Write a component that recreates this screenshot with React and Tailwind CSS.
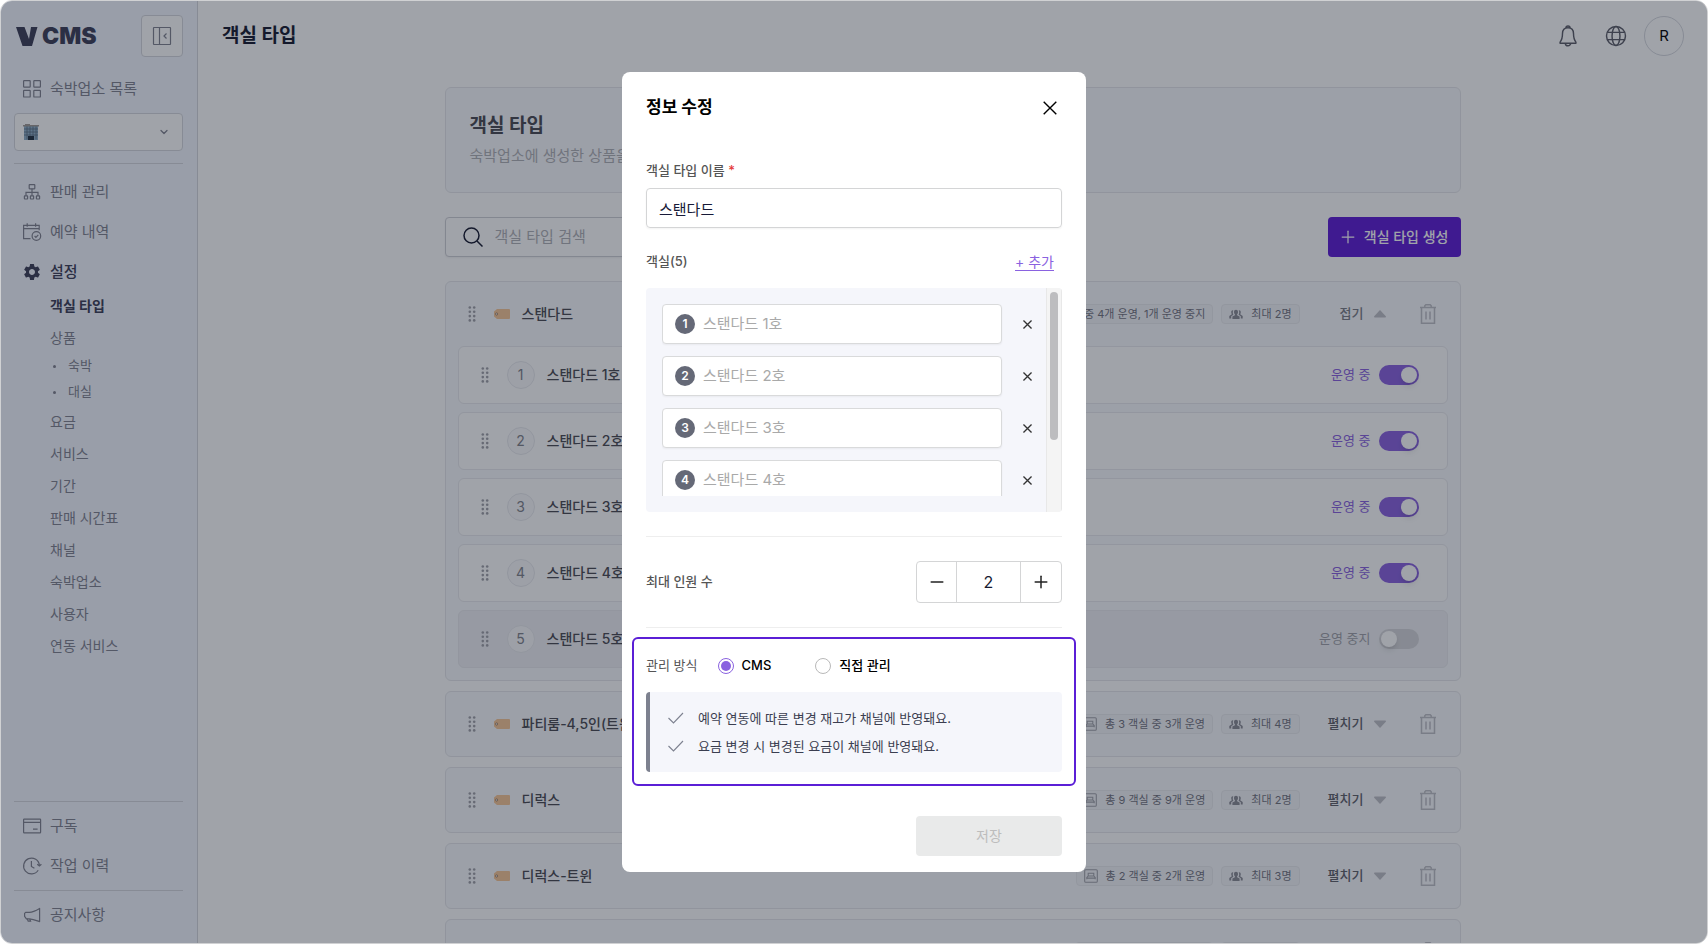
import { useState } from 'react';
import { ChevronDown, Plus, Minus } from 'lucide-react';
import { MdSettings } from 'react-icons/md';

const TYPES = [
  { id: 1, name: '스탠다드', rooms: '총 5 객실 중 4개 운영, 1개 운영 중지', max: 2, open: true },
  { id: 2, name: '파티룸-4,5인(트윈)', rooms: '총 3 객실 중 3개 운영', max: 4 },
  { id: 3, name: '디럭스', rooms: '총 9 객실 중 9개 운영', max: 2 },
  { id: 4, name: '디럭스-트윈', rooms: '총 2 객실 중 2개 운영', max: 3 },
  { id: 5, name: '스위트', rooms: '총 2 객실 중 2개 운영', max: 4 },
];

const ROOMS = [1, 2, 3, 4, 5].map((n) => ({ n, name: `스탠다드 ${n}호`, active: n !== 5 }));

const SETTINGS = ['요금', '서비스', '기간', '판매 시간표', '채널', '숙박업소', '사용자', '연동 서비스'];

const NOTES = ['예약 연동에 따른 변경 재고가 채널에 반영돼요.', '요금 변경 시 변경된 요금이 채널에 반영돼요.'];

function Svg({ size = 20, width = 1.2, className, children }) {
  return (
    <svg
      width={size}
      height={size}
      viewBox="0 0 20 20"
      fill="none"
      stroke="currentColor"
      strokeWidth={width}
      className={className}
      aria-hidden="true"
    >
      {children}
    </svg>
  );
}

const GridIcon = () => (
  <Svg>
    <rect x="1.6" y="1.6" width="6.6" height="6.6" rx="0.6" />
    <rect x="11.8" y="1.6" width="6.6" height="6.6" rx="0.6" />
    <rect x="1.6" y="11.4" width="6.6" height="6.6" rx="0.6" />
    <rect x="11.8" y="11.4" width="6.6" height="6.6" rx="0.6" />
  </Svg>
);

const TreeIcon = () => (
  <Svg>
    <rect x="7.2" y="2.6" width="5.6" height="4.2" rx="0.5" />
    <path d="M10 6.8v7M4 13.8v-3.4h12v3.4" />
    <rect x="2.4" y="13.8" width="3.2" height="3.2" rx="0.4" />
    <rect x="8.4" y="13.8" width="3.2" height="3.2" rx="0.4" />
    <rect x="14.4" y="13.8" width="3.2" height="3.2" rx="0.4" />
  </Svg>
);

const CalendarIcon = () => (
  <Svg>
    <path d="M8.5 16.6H1.6V3.4h15.6v4.8M1.6 6.6h15.6M5.2 1.2v3.6M13.6 1.2v3.6" />
    <circle cx="14.4" cy="14" r="4.3" />
    <path d="M12.6 14l1.3 1.3 2.4-2.4" />
  </Svg>
);

const CardIcon = () => (
  <Svg>
    <rect x="1.6" y="3.2" width="17" height="13.6" rx="0.6" />
    <path d="M1.6 6.4h17M11 13.2h4.6" />
  </Svg>
);

const HistoryIcon = () => (
  <Svg>
    <path d="M16.2 14.2A7.9 7.9 0 1 1 17.4 9.4M15.2 8.2l2.2 1.8 2-1.8M9.4 5v5.4l3 1.8" />
  </Svg>
);

const HornIcon = () => (
  <Svg>
    <path
      d="M3.6 7.4h3.8c3.4-.2 6.4-1.8 10.2-4v13.2c-3.8-1.4-6.6-2.6-10.2-2.8H4.4l-1.8-2.4V8.4z"
      strokeLinejoin="round"
    />
    <path d="M5.2 13.8l1 2.4h2.4l-.8-2.2" />
  </Svg>
);

const BellIcon = () => (
  <Svg size={24}>
    <path
      d="M8.3 3.3a1.7 1.7 0 0 1 3.4 0M10 3.2c-3 0-4.6 2.2-4.6 5 0 3.4-.5 5.2-2 6.9v.9h13.2v-.9c-1.5-1.7-2-3.5-2-6.9 0-2.8-1.6-5-4.6-5zM7.8 16a2.2 2.2 0 0 0 4.4 0"
      strokeLinejoin="round"
    />
  </Svg>
);

const GlobeIcon = () => (
  <Svg size={24}>
    <circle cx="10" cy="10" r="7.9" />
    <ellipse cx="10" cy="10" rx="3.3" ry="7.9" />
    <path d="M2.7 7h14.6M2.7 13h14.6" />
  </Svg>
);

const SearchIcon = () => (
  <Svg width={1.5} className="shrink-0 text-[#171a30]">
    <circle cx="8.5" cy="8.5" r="7.5" />
    <path d="M14 14l5.5 5.5" />
  </Svg>
);

const CloseIcon = ({ size = 14, width = 2 }) => (
  <Svg size={size} width={width}>
    <path d="M1 1l18 18M19 1L1 19" />
  </Svg>
);

const PanelIcon = () => (
  <Svg>
    <rect x="1.5" y="1.5" width="17" height="17" rx="0.5" />
    <path d="M7.5 1.5v17M14.5 7.5L12 10l2.5 2.5" />
  </Svg>
);

function BuildingIcon() {
  return (
    <svg width="16" height="16" viewBox="0 0 16 16" aria-hidden="true">
      <path d="M1 2h14v14H1z" fill="#8fb0c8" />
      <path d="M0 1h16v1.5H0zM2 0h5v1H2z" fill="#a09a94" />
      <path d="M1 5h14M1 8h14M1 11h14M4 2.5v13M7 2.5v13M10 2.5v13M13 2.5v13" stroke="#5a6d80" strokeWidth="0.8" />
      <path d="M5 12h6v4H5z" fill="#22303f" />
    </svg>
  );
}

function Grip() {
  return (
    <svg width="8" height="16" viewBox="0 0 8 16" className="shrink-0 fill-[#a0a1a8]" aria-hidden="true">
      {[1.5, 5.8, 10.1, 14.4].map((y) => (
        <g key={y}>
          <circle cx="1.8" cy={y} r="1.3" />
          <circle cx="6.2" cy={y} r="1.3" />
        </g>
      ))}
    </svg>
  );
}

function TagIcon() {
  return (
    <svg width="16" height="10" viewBox="0 0 16 10" className="shrink-0" aria-hidden="true">
      <path d="M3 0h12a1 1 0 0 1 1 1v8a1 1 0 0 1-1 1H3L0 7.5v-5z" fill="#f7c696" />
      <circle cx="2.6" cy="5" r="1.1" fill="#fff" stroke="#8a6a50" strokeWidth="0.7" />
    </svg>
  );
}

function BedIcon() {
  return (
    <Svg size={14} width={1.5} className="text-[#a0a1a8]">
      <rect x="1" y="1" width="18" height="18" rx="1.5" />
      <path d="M6 10V6h8v4M4 14.5V12l2-2h8l2 2v2.5M4 13h12" />
    </Svg>
  );
}

function PeopleIcon() {
  return (
    <svg width="14" height="10" viewBox="0 0 14 10" className="fill-[#8b8c95]" aria-hidden="true">
      <path d="M7 .8c1.200 0 2 .9 2 2.100 0 1-.5 1.900-.9 2.400v.9L10.600 7.600V10H3.400V7.600L5.900 6.200v-.9C5.500 4.800 5 3.900 5 2.900 5 1.700 5.800.8 7 .8z" />
      <path d="M4.300 1.200C3 .9 2.200 1.800 2.200 3c0 1 .3 1.600.6 2.200L.3 7v2.400h1.900V7.200l2.200-1.400C3.700 4.500 3.600 2.500 4.300 1.200zM9.700 1.200c1.300-.3 2.100.6 2.100 1.800 0 1-.3 1.600-.6 2.200L13.700 7v2.400h-1.900V7.200L9.600 5.800c.7-1.300.8-3.300.1-4.600z" />
    </svg>
  );
}

function TrashIcon() {
  return (
    <svg width="16" height="20" viewBox="0 0 16 20" fill="none" stroke="currentColor" strokeWidth="1.5" aria-hidden="true">
      <path d="M0 3.6h16M4.800 3.600V1.800l1-1h4.400l1 1v1.800M1.500 3.600v15.700h13V3.600M6 7.500v8M10 7.500v8" />
    </svg>
  );
}

function CheckIcon() {
  return (
    <svg width="16" height="12" viewBox="0 0 16 12" fill="none" stroke="#7d818f" strokeWidth="1.1" aria-hidden="true">
      <path d="M0.500 6l5 5L15 1" />
    </svg>
  );
}

function NavItem({ icon, children, active }) {
  return (
    <a
      href="#"
      className={`flex h-10 items-center gap-2 pl-2 text-[15px] ${
        active ? 'font-medium text-[#3d3e58]' : 'text-[#80828f]'
      }`}
    >
      <span className="flex w-5 justify-center">{icon}</span>
      {children}
    </a>
  );
}

function SubItem({ children, active }) {
  return (
    <a
      href="#"
      className={`flex h-8 items-center pl-9 text-sm ${active ? 'font-bold text-[#3d3e58]' : 'text-[#80828f]'}`}
    >
      {children}
    </a>
  );
}

function Sidebar() {
  return (
    <aside className="flex w-[197px] shrink-0 flex-col border-r border-[#d6d8de] bg-[#f4f7ff] pt-3.5 pr-3.5 pb-2 pl-[13px]">
      <div className="flex items-center justify-between pl-0.5 text-[#3d3e58]">
        <div className="flex items-center gap-1">
          <svg width="22" height="19" viewBox="0 0 22 19" fill="currentColor" className="shrink-0" aria-hidden="true">
            <path d="M0 0h8.500l4.500 12L15 0h6.500l-5.500 19H6.500z" />
          </svg>
          <span className="text-[23px] leading-6 font-black">CMS</span>
        </div>
        <button
          type="button"
          aria-label="메뉴 접기"
          className="flex size-[42px] items-center justify-center rounded border border-[#d6d8de] bg-white text-[#80828f]"
        >
          <PanelIcon />
        </button>
      </div>
      <div className="mt-3">
        <NavItem icon={<GridIcon />}>숙박업소 목록</NavItem>
      </div>
      <button
        type="button"
        aria-label="숙박업소 선택"
        className="mt-1 flex h-[38px] shrink-0 items-center justify-between rounded border border-[#d6d8de] bg-white px-2 text-[#80828f]"
      >
        <BuildingIcon />
        <ChevronDown size={12} strokeWidth={2.5} className="mr-1" />
      </button>
      <nav className="mt-3 border-t border-[#d6d8de] pt-2">
        <NavItem icon={<TreeIcon />}>판매 관리</NavItem>
        <NavItem icon={<CalendarIcon />}>예약 내역</NavItem>
        <NavItem icon={<MdSettings size={20} />} active>
          설정
        </NavItem>
        <div className="-mt-0.5">
          <SubItem active>객실 타입</SubItem>
          <SubItem>상품</SubItem>
          <ul className="mb-0.5 flex flex-col gap-0.5 pl-9 text-[13px] text-[#80828f]">
            {['숙박', '대실'].map((item) => (
              <li key={item}>
                <a href="#" className="flex h-6 items-center gap-3 pl-[3px]">
                  <span className="size-[3px] rounded-full bg-[#80828f]" />
                  {item}
                </a>
              </li>
            ))}
          </ul>
          {SETTINGS.map((item) => (
            <SubItem key={item}>{item}</SubItem>
          ))}
        </div>
      </nav>
      <div className="mt-auto border-t border-[#d6d8de] py-1">
        <NavItem icon={<CardIcon />}>구독</NavItem>
        <NavItem icon={<HistoryIcon />}>작업 이력</NavItem>
      </div>
      <div className="border-t border-[#d6d8de] pt-1">
        <NavItem icon={<HornIcon />}>공지사항</NavItem>
      </div>
    </aside>
  );
}

function Header() {
  return (
    <header className="flex h-[70px] shrink-0 items-center justify-between pr-[23px] pl-6">
      <h1 className="text-[19px] font-bold text-[#171a30]">객실 타입</h1>
      <div className="flex gap-2 text-[#5c5d68]">
        <button type="button" aria-label="알림" className="flex size-10 items-center justify-center">
          <BellIcon />
        </button>
        <button type="button" aria-label="언어" className="flex size-10 items-center justify-center">
          <GlobeIcon />
        </button>
        <button type="button" className="size-10 rounded-full border border-[#d6d8de] text-[15px] text-black">
          R
        </button>
      </div>
    </header>
  );
}

function Badge({ icon, children }) {
  return (
    <span className="flex h-5 items-center gap-2 rounded border border-[#eaebef] bg-[#f4f5f9] px-[7px] text-[11px] whitespace-nowrap text-[#72737e]">
      {icon}
      {children}
    </span>
  );
}

function RoomRow({ room }) {
  return (
    <li
      className={`flex h-[58px] items-center rounded-md border border-[#e9eaee] pr-7 pl-[22px] ${
        room.active ? 'bg-white' : 'bg-[#f0f1f5]'
      }`}
    >
      <Grip />
      <span className="ml-[18px] flex size-7 items-center justify-center rounded-full border border-[#e9eaee] bg-[#fafafc] text-sm text-[#80828a]">
        {room.n}
      </span>
      <span className="ml-3 text-sm font-medium text-[#4a4a52]">{room.name}</span>
      <label
        className={`ml-auto flex items-center gap-2 text-[13px] ${room.active ? 'text-[#8a62e0]' : 'text-[#a0a1a8]'}`}
      >
        {room.active ? '운영 중' : '운영 중지'}
        <input
          type="checkbox"
          defaultChecked={room.active}
          className="h-5 w-10 appearance-none rounded-full bg-[#d6d6da] before:mt-0.5 before:ml-0.5 before:block before:size-4 before:rounded-full before:bg-white before:shadow-md checked:bg-[#8a62e0] checked:before:ml-[22px]"
        />
      </label>
    </li>
  );
}

function TypeCard({ type }) {
  return (
    <section className="rounded-md border border-[#e6e7eb] bg-[#f9fafd]">
      <div className="flex h-16 items-center pr-6 pl-[22px]">
        <Grip />
        <span className="ml-[18px]">
          <TagIcon />
        </span>
        <h3 className="ml-3 text-sm font-medium text-[#4a4a52]">{type.name}</h3>
        <div className="ml-auto flex gap-2">
          <Badge icon={<BedIcon />}>{type.rooms}</Badge>
          <Badge icon={<PeopleIcon />}>최대 {type.max}명</Badge>
        </div>
        <button
          type="button"
          className={`ml-6 flex w-[62px] items-center justify-end gap-2.5 text-[13px] font-medium ${
            type.open ? 'text-[#7c7d86]' : 'text-[#60616a]'
          }`}
        >
          {type.open ? '접기' : '펼치기'}
          <svg width="12" height="8" viewBox="0 0 12 8" className="fill-[#bfc0c6]" aria-hidden="true">
            <path d={type.open ? 'M6 0l6 6.5-.5 1H.5L0 6.5z' : 'M6 8L0 1.5l.5-1h11l.5 1z'} />
          </svg>
        </button>
        <button type="button" aria-label="삭제" className="ml-[34px] text-[#bfc0c6]">
          <TrashIcon />
        </button>
      </div>
      {type.open && (
        <ul className="flex flex-col gap-2 px-3 pb-3">
          {ROOMS.map((room) => (
            <RoomRow key={room.n} room={room} />
          ))}
        </ul>
      )}
    </section>
  );
}

function Content() {
  return (
    <main className="mx-auto mt-4 w-full max-w-[1016px]">
      <section className="flex h-[106px] flex-col rounded-md border border-[#e6e7eb] bg-[#f9fafd] px-6 pt-6">
        <h2 className="text-[19px] leading-7 font-bold text-[#4a4a52]">객실 타입</h2>
        <p className="mt-1 text-[15px] leading-6 text-[#b0b1b6]">숙박업소에 생성한 상품을 관리할 수 있습니다.</p>
      </section>
      <div className="mt-6 flex items-center justify-between">
        <label className="flex h-10 w-[400px] items-center gap-3 rounded border border-[#cfd0d6] bg-white px-[17px] shadow-xs">
          <SearchIcon />
          <input
            type="search"
            aria-label="객실 타입 검색"
            placeholder="객실 타입 검색"
            className="w-full text-[15px] outline-none placeholder:text-[#b0b1b6]"
          />
        </label>
        <button
          type="button"
          className="flex h-10 items-center gap-1.5 rounded bg-[#5e1bd6] pr-3 pl-2.5 text-sm font-medium text-white"
        >
          <Plus size={20} strokeWidth={1.5} />
          객실 타입 생성
        </button>
      </div>
      <div className="mt-6 flex flex-col gap-2.5">
        {TYPES.map((type) => (
          <TypeCard key={type.id} type={type} />
        ))}
      </div>
    </main>
  );
}

function RoomInput({ room }) {
  return (
    <li className="flex items-center">
      <label className="flex h-10 w-[340px] items-center gap-2 rounded border border-[#d9dadb] bg-white px-3 shadow-xs">
        <span className="flex size-5 shrink-0 items-center justify-center rounded-full bg-[#656977] text-xs font-semibold text-white">
          {room.n}
        </span>
        <input
          type="text"
          placeholder={room.name}
          className="w-full text-[15px] outline-none placeholder:text-[#a9a9a9]"
        />
      </label>
      <button type="button" aria-label={`${room.name} 삭제`} className="ml-[21px] text-[#333]">
        <CloseIcon size={9} width={3} />
      </button>
    </li>
  );
}

function Radio({ value, checked, onChange, children }) {
  return (
    <label className="flex items-center gap-2 text-[13px] font-medium text-black">
      <input
        type="radio"
        name="manage"
        value={value}
        checked={checked}
        onChange={onChange}
        className="flex size-4 appearance-none items-center justify-center rounded-full border border-[#b9b9b9] bg-white checked:border-[#8a62e0] checked:before:size-2.5 checked:before:rounded-full checked:before:bg-[#8a62e0]"
      />
      {children}
    </label>
  );
}

function EditModal() {
  const [count, setCount] = useState(2);
  const [manage, setManage] = useState('cms');

  return (
    <div
      role="dialog"
      aria-modal="true"
      aria-labelledby="modal-title"
      className="flex w-[464px] flex-col rounded-lg bg-white px-6 pb-4"
    >
      <div className="flex h-[72px] items-center justify-between">
        <h2 id="modal-title" className="text-[17px] font-bold text-black">
          정보 수정
        </h2>
        <button type="button" aria-label="닫기" className="pr-[5px] text-black">
          <CloseIcon />
        </button>
      </div>

      <label htmlFor="type-name" className="mt-4 text-[13px] leading-5 font-medium text-[#555]">
        객실 타입 이름 <span className="text-[#e53939]">*</span>
      </label>
      <input
        id="type-name"
        type="text"
        defaultValue="스탠다드"
        className="mt-2 h-10 rounded border border-[#d4d5d6] px-3 text-[15px] text-[#171a38] shadow-xs outline-none"
      />

      <div className="flex h-[60px] items-center justify-between pt-2 pr-2">
        <span className="text-[13px] font-medium text-[#555]">객실(5)</span>
        <button type="button" className="text-sm text-[#8a62e0] underline underline-offset-3">
          + 추가
        </button>
      </div>
      <div className="flex h-56 overflow-hidden rounded bg-[#f5f6fb]">
        <div className="flex-1 py-4 pl-4">
          <ul className="flex h-48 flex-col gap-3 overflow-hidden">
            {ROOMS.map((room) => (
              <RoomInput key={room.n} room={room} />
            ))}
          </ul>
        </div>
        <div className="w-4 border-x border-[#e8e8e8] bg-[#f4f4f4] px-[3px] pt-1">
          <div className="h-[148px] w-2 rounded-full bg-[#bdbdbf]" />
        </div>
      </div>

      <div className="mt-6 flex items-center justify-between border-y border-[#eee] py-6">
        <label htmlFor="max-people" className="text-[13px] font-medium text-[#555]">
          최대 인원 수
        </label>
        <div className="flex h-[42px] w-[146px] divide-x divide-[#d4d5d6] overflow-hidden rounded border border-[#d4d5d6] text-[#222]">
          <button
            type="button"
            aria-label="감소"
            onClick={() => setCount(Math.max(1, count - 1))}
            className="flex w-10 shrink-0 items-center justify-center"
          >
            <Minus size={20} strokeWidth={1.8} />
          </button>
          <input
            id="max-people"
            type="text"
            value={count}
            readOnly
            className="w-full min-w-0 text-center text-base text-[#171a30] outline-none"
          />
          <button
            type="button"
            aria-label="증가"
            onClick={() => setCount(count + 1)}
            className="flex w-10 shrink-0 items-center justify-center"
          >
            <Plus size={20} strokeWidth={1.8} />
          </button>
        </div>
      </div>

      <fieldset className="-mx-3.5 mt-[9px] rounded-md border-2 border-[#5b1fd6] px-3 pb-3">
        <div className="flex h-[53px] items-center">
          <span className="mr-5 text-[13px] text-[#555]">관리 방식</span>
          <div className="flex gap-11">
            <Radio value="cms" checked={manage === 'cms'} onChange={() => setManage('cms')}>
              CMS
            </Radio>
            <Radio value="direct" checked={manage === 'direct'} onChange={() => setManage('direct')}>
              직접 관리
            </Radio>
          </div>
        </div>
        <ul className="flex h-20 flex-col justify-center rounded border-l-4 border-[#7d818f] bg-[#f5f6fb] pl-[18px] text-[13px] leading-7 text-[#3b3e50]">
          {NOTES.map((note) => (
            <li key={note} className="flex items-center gap-3.5">
              <CheckIcon />
              {note}
            </li>
          ))}
        </ul>
      </fieldset>

      <button
        type="button"
        disabled
        className="mt-[30px] h-10 w-[146px] self-end rounded bg-[#e9eaea] text-sm text-[#bdbdbd]"
      >
        저장
      </button>
    </div>
  );
}

export default function App() {
  return (
    <div className="relative flex h-screen overflow-hidden rounded-xl border border-[#d0d1d3] bg-white font-['Inter','Noto_Sans_CJK_KR',sans-serif]">
      <Sidebar />
      <div className="flex min-w-0 flex-1 flex-col">
        <Header />
        <Content />
      </div>
      <div className="absolute inset-0 flex items-center justify-center bg-[#111827]/40">
        <EditModal />
      </div>
    </div>
  );
}
